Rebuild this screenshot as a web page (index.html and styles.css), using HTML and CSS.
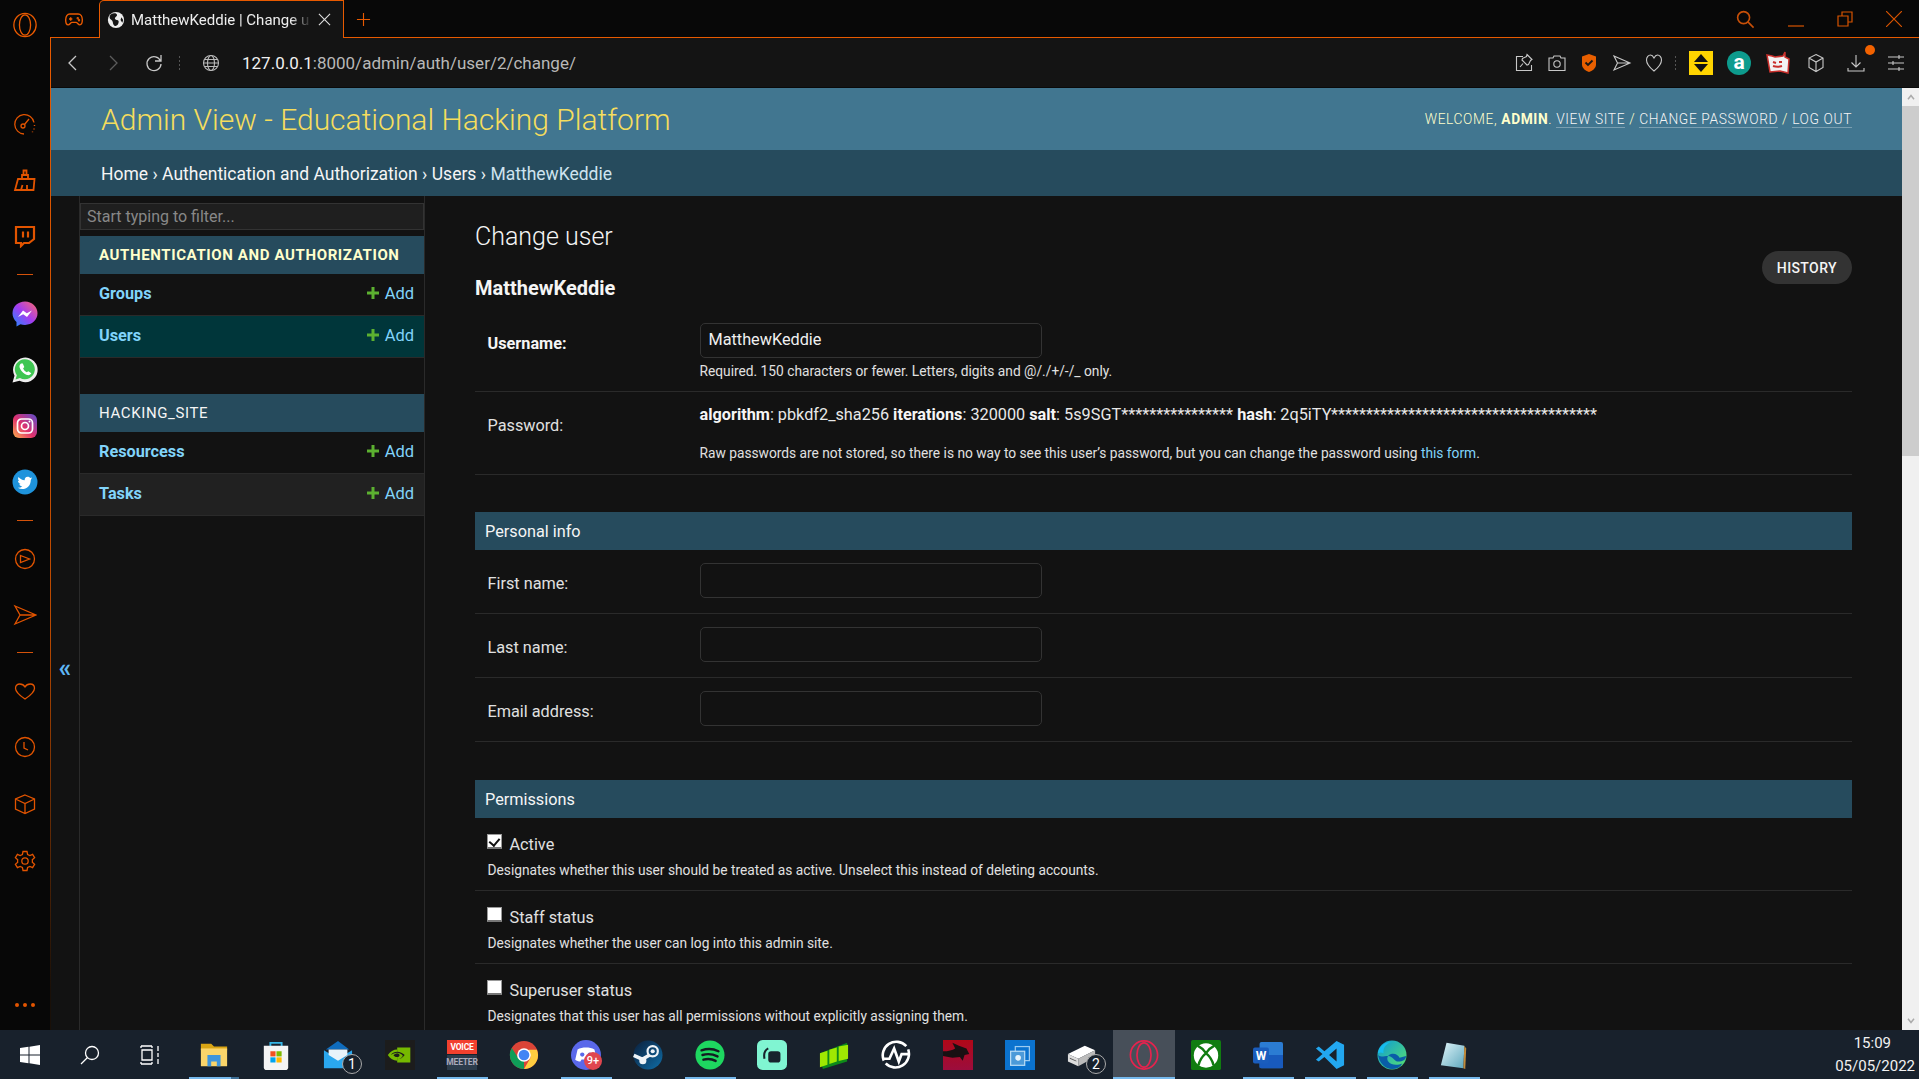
FILE: index.html
```html
<!DOCTYPE html>
<html lang="en">
<head>
<meta charset="utf-8">
<title>MatthewKeddie | Change user</title>
<link rel="stylesheet" href="styles.css">
</head>
<body>
<div class="screen">
  <div class="desk">
    <nav class="rail">
      <svg class="ri logo" viewBox="0 0 28 28"><ellipse cx="14" cy="14" rx="12" ry="12.5"/><ellipse cx="14" cy="14" rx="6" ry="11"/></svg>
      <svg class="ri speed" viewBox="0 0 24 24"><path d="M11 22A9.700 9.700 0 1 1 21 10.500M11.500 12.500L16 7"/><circle cx="10" cy="14" r="2"/><path d="M21.500 13v1M21 16.500v1M19.500 19.500v.8" stroke-width="1.400"/></svg>
      <svg class="ri broom" viewBox="0 0 24 24"><path d="M5 11h16.500l-1 11H2zM9 11V7h6v4M10.500 7V2.500h3V7M8 22l1.500-5M14 22v-5"/></svg>
      <svg class="ri twitch" viewBox="0 0 24 24"><path d="M3 3h18v12l-5 4h-5l-3 3v-3H3z"/><path d="M10 7.500v6M15 7.500v6"/></svg>
      <i class="rdiv"></i>
      <svg class="ra mess" viewBox="0 0 26 26"><defs><linearGradient id="mg" x1="0" y1="1" x2="1" y2="0"><stop offset="0" stop-color="#1b8cff"/><stop offset=".5" stop-color="#a33cf0"/><stop offset="1" stop-color="#ff6a6a"/></linearGradient></defs><path fill="url(#mg)" d="M13 .5C6 .5.500 5.500.500 12.300c0 3.500 1.500 6.500 4 8.700v4.500l4-2.300c1.300.4 2.900.7 4.500.7 7 0 12.500-5 12.500-11.600S20 .5 13 .5z"/><path fill="#fff" d="M6 16l5-6.500 3.800 2.800L20 9.500 15 16l-3.800-2.800z"/></svg>
      <svg class="ra" viewBox="0 0 26 26"><path fill="#eee" d="M.5 25.500l2-6.800a12.300 12.300 0 1 1 5 5z"/><path fill="#3fc652" d="M3.500 22.500l1.300-4.300A10 10 0 1 1 8 21z"/><path fill="#fff" d="M9 6.500c-1.500 1-2 3-1 5 1.500 3 4 5.500 7 6.500 2 .5 3.500-.2 4.300-1.700l-3-2-1.500 1c-1.700-.8-3-2.300-3.700-3.800l1.200-1.500-1.500-3.500z"/></svg>
      <svg class="ra" viewBox="0 0 26 26"><defs><linearGradient id="ig" x1="0" y1="1" x2="1" y2="0"><stop offset="0" stop-color="#fdb34e"/><stop offset=".45" stop-color="#e1306c"/><stop offset="1" stop-color="#5a4fcf"/></linearGradient></defs><rect x="1" y="1" width="24" height="24" rx="6" fill="url(#ig)"/><rect x="5.500" y="6" width="15" height="14" rx="4" fill="none" stroke="#fff" stroke-width="1.700"/><circle cx="13" cy="13" r="3.500" fill="none" stroke="#fff" stroke-width="1.700"/><circle cx="17.500" cy="8.500" r="1" fill="#fff"/></svg>
      <svg class="ra" viewBox="0 0 26 26"><circle cx="13" cy="13" r="12.500" fill="#1e93dc"/><path fill="#fff" d="M20 8.500l-1.800.5c-.6-.8-1.500-1.300-2.500-1.300-1.900 0-3.300 1.600-3 3.500-2.500-.1-4.700-1.300-6.200-3.200-.8 1.500-.4 3.200.9 4.200l-1.400-.4c0 1.600 1.100 2.900 2.600 3.300l-1.300.1c.4 1.300 1.700 2.200 3 2.200-1.400 1-3 1.500-4.600 1.300 5.500 3.200 13 .3 13.100-7.800z"/></svg>
      <i class="rdiv"></i>
      <svg class="ri" viewBox="0 0 24 24"><circle cx="12" cy="12" r="9.500"/><path d="M7.500 8.500l9 3.500-9 3.500z"/></svg>
      <svg class="ri send" viewBox="0 0 24 24"><path d="M2 3l21 9-21 9 5-9zM7 12h16"/></svg>
      <i class="rdiv"></i>
      <svg class="ri" viewBox="0 0 24 24"><path d="M12 20C6 16 2.500 13 2.500 9.200 2.500 6.500 4.500 5 6.800 5 9 5 11 6.300 12 8c1-1.700 3-3 5.200-3 2.300 0 4.300 1.500 4.300 4.200C21.500 13 18 16 12 20z"/></svg>
      <svg class="ri" viewBox="0 0 24 24"><circle cx="12" cy="12" r="9.500"/><path d="M11 7v6l4 2"/></svg>
      <svg class="ri low" viewBox="0 0 24 24"><path d="M12 3l9.500 4v10L12 21.500 2.500 17V7zM2.500 7l9.500 4.500L21.500 7M12 11.500v10"/></svg>
      <svg class="ri low" viewBox="0 0 24 24"><circle cx="12" cy="12" r="3.200"/><path d="M10 2.500h4l.6 3 2.300 1.100 2.700-1.300 2 3.400-2.300 2a7 7 0 0 1 0 2.600l2.300 2-2 3.400-2.700-1.300-2.300 1.100-.6 3h-4l-.6-3-2.300-1.100-2.700 1.300-2-3.400 2.300-2a7 7 0 0 1 0-2.600l-2.300-2 2-3.400 2.700 1.300 2.300-1.100z"/></svg>
      <div class="dots"><i></i><i></i><i></i></div>
    </nav>
    <div class="browser">
      <div class="tabbar">
        <svg class="game" viewBox="0 0 24 24"><path d="M7 6h10c3 0 5 3 5 7s-1 6-3 6-3-3-4.500-3h-5C8 16 7 19 5 19s-3-2-3-6 2-7 5-7zM6 12h4M8 10v4"/><circle cx="16.500" cy="11" r=".6"/><circle cx="18" cy="13.500" r=".6"/></svg>
        <div class="tab">
          <svg class="fav" viewBox="0 0 20 20"><circle cx="10" cy="10" r="9" fill="#eee"/><path fill="#161616" d="M4 4c3-2 6-2 7 0s-3 3-2 5 4 0 4 3-3 6-5 4-1-5-3-6-3-3-1-6zM16 7l2 3-1 3-2-3z"/></svg>
          <span class="tab-title">MatthewKeddie | Change u</span>
          <svg class="tab-x" viewBox="0 0 14 14"><path d="M1 1l12 12M13 1L1 13"/></svg>
        </div>
        <svg class="plus" viewBox="0 0 16 16"><path d="M8 1v14M1 8h14"/></svg>
        <div class="win">
          <svg class="w-search" viewBox="0 0 20 20"><circle cx="8" cy="8" r="6.300"/><path d="M12.500 12.500l6 6"/></svg>
          <svg class="w-btn" viewBox="0 0 16 16"><path d="M0 15h16"/></svg>
          <svg class="w-btn" viewBox="0 0 16 16"><path d="M1 5h10v10H1zM5 5V1h10v10h-4"/></svg>
          <svg class="w-btn" viewBox="0 0 16 16"><path d="M0 0l16 16M16 0L0 16"/></svg>
        </div>
      </div>
      <div class="pane">
        <div class="toolbar">
          <svg class="tb back" viewBox="0 0 20 20"><path d="M13 3l-7 7 7 7"/></svg>
          <svg class="tb fwd" viewBox="0 0 20 20"><path d="M7 3l7 7-7 7"/></svg>
          <svg class="tb reload" viewBox="0 0 20 20"><path d="M16.500 8A7 7 0 1 0 17 11M17 2v6h-6"/></svg>
          <i class="tsep"></i>
          <svg class="tb globe" viewBox="0 0 20 20"><circle cx="10" cy="10" r="7.500"/><ellipse cx="10" cy="10" rx="3.500" ry="7.500"/><path d="M2.500 10h15M3.500 6.500h13M3.500 13.500h13"/></svg>
          <div class="url"><span class="host">127.0.0.1</span>:8000/admin/auth/user/2/change/</div>
          <div class="tools">
            <svg class="tb" viewBox="0 0 20 20"><path d="M9 3.500H2.500v14h15V12M6 14l3-3.500M13 1.500l5 5-1.500 1-2 4-1.500.5-5-5 .5-1.500 4-2z"/></svg>
            <svg class="tb" viewBox="0 0 20 20"><path d="M2 5h4l1-2h6l1 2h4v12.500H2z"/><circle cx="10" cy="11" r="3.200"/></svg>
            <svg class="tb" viewBox="0 0 20 20"><path class="shield" d="M10 1l7 2.500v8c0 4-4 6.500-7 7.500-3-1-7-3.500-7-7.500v-8z"/><path d="M6.500 9.500l2.500 2.500 4.500-4.500" stroke="#161616" stroke-width="1.800"/></svg>
            <svg class="tb" viewBox="0 0 20 20"><path d="M2 3l16 7-16 7 3.500-7zM5.500 10H18"/></svg>
            <svg class="tb" viewBox="0 0 20 20"><path d="M10 18C5 14 2.500 11 2.500 7c0-3 2-5 4-5s2.500 1 3.500 3c1-2 1.500-3 3.500-3s4 2 4 5c0 4-2.500 7-7.500 11z"/></svg>
            <i class="tsep tsep-r"></i>
            <svg class="ext" viewBox="0 0 24 24"><rect width="24" height="24" fill="#ffd400"/><path d="M12 3l7 8H5zM12 21l-7-8h14z" fill="#111"/></svg>
            <svg class="ext" viewBox="0 0 24 24"><circle cx="12" cy="12" r="12" fill="#0d9b8d"/><text class="ext-a" x="12" y="18" text-anchor="middle">a</text></svg>
            <svg class="ext ext-r" viewBox="0 0 24 24"><path fill="#f2f2f2" stroke="#c9302c" stroke-width="1.500" d="M1 4l5 1 3 1 8-1 2-4v5l4 2-1 14-8-2-10 1z"/><path d="M7 11l3 1M13 11l3 0M7 15c3 1 6 1 9 0" fill="none" stroke="#c9302c" stroke-width="2"/></svg>
            <svg class="tb" viewBox="0 0 20 20"><path d="M10 1.500l7 3.500v9.500l-7 4-7-4V5zM3 5l7 4 7-4M10 9v9.500"/></svg>
            <div class="dl">
              <svg class="tb" viewBox="0 0 20 20"><path d="M10 2v12M5.500 9.500L10 14l4.500-4.500M2 15v3h16v-3"/></svg>
              <i class="badge"></i>
            </div>
            <svg class="tb" viewBox="0 0 20 20"><path d="M2 4h16M2 10h16M2 16h16M13 2v4M7 8v4M13 14v4"/></svg>
          </div>
        </div>
        <div class="viewport">
          <div class="page">
            <header class="site-head">
              <h1 class="brand">Admin View - Educational Hacking Platform</h1>
              <div class="user-tools">Welcome, <strong>admin</strong>. <a>View site</a> / <a>Change password</a> / <a>Log out</a></div>
            </header>
            <div class="crumbs"><a>Home</a> <i class="sep">›</i> <a>Authentication and Authorization</a> <i class="sep">›</i> <a>Users</a> <i class="sep">›</i> MatthewKeddie</div>
            <div class="main">
              <div class="toggle">«</div>
              <aside class="side">
                <div class="filter">Start typing to filter...</div>
                <section class="app">
                  <div class="cap cap-strong">Authentication and Authorization</div>
                  <div class="row"><a>Groups</a><span class="add"><svg class="addp" viewBox="0 0 12 12"><path d="M4.500 0h3v4.500H12v3H7.500V12h-3V7.500H0v-3h4.500z"/></svg>Add</span></div>
                  <div class="row cur"><a>Users</a><span class="add"><svg class="addp" viewBox="0 0 12 12"><path d="M4.500 0h3v4.500H12v3H7.500V12h-3V7.500H0v-3h4.500z"/></svg>Add</span></div>
                </section>
                <section class="app">
                  <div class="cap">hacking_site</div>
                  <div class="row"><a>Resourcess</a><span class="add"><svg class="addp" viewBox="0 0 12 12"><path d="M4.500 0h3v4.500H12v3H7.500V12h-3V7.500H0v-3h4.500z"/></svg>Add</span></div>
                  <div class="row alt"><a>Tasks</a><span class="add"><svg class="addp" viewBox="0 0 12 12"><path d="M4.500 0h3v4.500H12v3H7.500V12h-3V7.500H0v-3h4.500z"/></svg>Add</span></div>
                </section>
              </aside>
              <main class="content">
                <h2 class="title">Change user</h2>
                <div class="objhead">
                  <h3 class="obj">MatthewKeddie</h3>
                  <span class="history">History</span>
                </div>
                <div class="frow r-user">
                  <label class="lab req">Username:</label>
                  <div class="fld">
                    <div class="inp val">MatthewKeddie</div>
                    <div class="help">Required. 150 characters or fewer. Letters, digits and @/./+/-/_ only.</div>
                  </div>
                </div>
                <div class="frow r-pass">
                  <label class="lab">Password:</label>
                  <div class="fld">
                    <div class="hash"><strong>algorithm</strong>: pbkdf2_sha256 <strong>iterations</strong>: 320000 <strong>salt</strong>: 5s9SGT**************** <strong>hash</strong>: 2q5iTY**************************************</div>
                    <div class="help pw">Raw passwords are not stored, so there is no way to see this user’s password, but you can change the password using <a class="lnk">this form</a>.</div>
                  </div>
                </div>
                <h4 class="fs">Personal info</h4>
                <div class="frow r-text"><label class="lab">First name:</label><div class="fld"><div class="inp"></div></div></div>
                <div class="frow r-text"><label class="lab">Last name:</label><div class="fld"><div class="inp"></div></div></div>
                <div class="frow r-text"><label class="lab">Email address:</label><div class="fld"><div class="inp"></div></div></div>
                <h4 class="fs">Permissions</h4>
                <div class="crow">
                  <label class="chk"><input type="checkbox" checked>Active</label>
                  <div class="help">Designates whether this user should be treated as active. Unselect this instead of deleting accounts.</div>
                </div>
                <div class="crow">
                  <label class="chk"><input type="checkbox">Staff status</label>
                  <div class="help">Designates whether the user can log into this admin site.</div>
                </div>
                <div class="crow">
                  <label class="chk"><input type="checkbox">Superuser status</label>
                  <div class="help">Designates that this user has all permissions without explicitly assigning them.</div>
                </div>
              </main>
            </div>
          </div>
          <div class="scroll">
            <div class="sb-btn"><svg viewBox="0 0 10 8"><path d="M1 7l4-5 4 5"/></svg></div>
            <div class="sb-track"><div class="sb-thumb"></div></div>
            <div class="sb-btn"><svg viewBox="0 0 10 8"><path d="M1 1l4 5 4-5"/></svg></div>
          </div>
        </div>
      </div>
    </div>
  </div>
  <footer class="taskbar">
    <div class="sys"><svg viewBox="0 0 20 20"><path fill="#fff" d="M0 3l8.500-1.200v7.700H0zM9.500 1.700L20 0v9.500H9.500zM0 10.500h8.500v7.700L0 17zM9.500 10.500H20V20L9.500 18.300z"/></svg></div>
    <div class="sys"><svg viewBox="0 0 20 20"><circle cx="12" cy="8" r="6.500" fill="none" stroke="#fff" stroke-width="1.300"/><path d="M7.500 12.500L1 19" stroke="#fff" stroke-width="1.300"/></svg></div>
    <div class="sys"><svg viewBox="0 0 20 20"><path d="M1 1h11M1 19h11M2 5h10v10H2zM18 1v5M18 8v4M18 14v5M1 1v2M12 1v2M1 19v-2M12 19v-2" fill="none" stroke="#fff" stroke-width="1.300"/></svg></div>
    <div class="app-i on stack"><svg viewBox="0 0 32 32"><path fill="#d9a514" d="M2 4h11l3 3h14v4H2z"/><path fill="#fbd56a" d="M2 9h28v19H2z"/><path fill="#3f95dd" d="M9 16h14v12h-4v-5h-6v5H9z"/></svg></div>
    <div class="app-i"><svg viewBox="0 0 32 32"><path fill="none" stroke="#35b5e5" stroke-width="2" d="M10 7V3h12v4"/><path fill="#f4f4f4" d="M3 6h26v23a3 3 0 0 1-3 3H6a3 3 0 0 1-3-3z"/><rect x="10" y="12" width="5.500" height="5.500" fill="#f25022"/><rect x="16.500" y="12" width="5.500" height="5.500" fill="#7fba00"/><rect x="10" y="18.500" width="5.500" height="5.500" fill="#00a4ef"/><rect x="16.500" y="18.500" width="5.500" height="5.500" fill="#ffb900"/></svg></div>
    <div class="app-i"><svg viewBox="0 0 32 32"><path fill="#0f6cbd" d="M16 1L28 10H3z"/><path fill="#2aa7ee" d="M1 11l15 9 15-9v19H1z"/><path fill="#e9f3fa" d="M6 10h20v6l-10 6-10-6z"/></svg><span class="count">1</span></div>
    <div class="app-i"><svg viewBox="0 0 32 32"><rect width="32" height="32" fill="#1c1c1c"/><rect x="13" y="8" width="14" height="16" fill="#76b900"/><path fill="#76b900" d="M3 16c2.500-4 6-6 10-6v12c-4 0-7.500-2-10-6z"/><path fill="#1c1c1c" d="M6 16c2-2.300 4.500-3.500 7-3.500 3 0 6 1.500 8 3.500-2 3-5 4.500-8 4.500 3 0 5.500-2 6-4-2-2-4-3-6-3-2.300 0-5 1-7 2.500zm7-1.500c-1.500 0-3 .7-4 1.700 1 1.300 2.500 2 4 2 1.500 0 2.500-1 2.500-2s-1-1.700-2.500-1.700z"/></svg></div>
    <div class="app-i on"><div class="vm"><span class="vm-a">VOICE</span><span class="vm-b">MEETER</span></div></div>
    <div class="app-i"><svg viewBox="0 0 32 32"><circle cx="16" cy="16" r="15" fill="#db4437"/><path fill="#0f9d58" d="M16 31A15 15 0 0 1 3 8.500L10 19.500l6 2.500z"/><path fill="#ffcd40" d="M31 16a15 15 0 0 1-15 15l7-12-2-8.500h8.700A15 15 0 0 1 31 16z"/><circle cx="16" cy="16" r="7.300" fill="#fff"/><circle cx="16" cy="16" r="5.700" fill="#4285f4"/></svg></div>
    <div class="app-i on"><svg viewBox="0 0 32 32"><circle cx="16" cy="16" r="16" fill="#5a68ea"/><path fill="#fff" d="M7 10c5-2.500 13-2.500 18 0l2.500 11c-1.500 1-3.500 2-5.500 2l-1.300-2.300H11.300L10 23c-2 0-4-1-5.500-2z"/><circle cx="12" cy="15.500" r="2.300" fill="#5a68ea"/><circle cx="20" cy="15.500" r="2.300" fill="#5a68ea"/></svg><span class="nine">9+</span></div>
    <div class="app-i"><svg viewBox="0 0 32 32"><defs><linearGradient id="st" x1="0" y1="0" x2="1" y2="1"><stop offset="0" stop-color="#0b1e3a"/><stop offset="1" stop-color="#0f6ea8"/></linearGradient></defs><circle cx="16" cy="16" r="15.500" fill="url(#st)"/><circle cx="21" cy="12" r="5.500" fill="none" stroke="#eef3f7" stroke-width="2.300"/><circle cx="21" cy="12" r="2.200" fill="#eef3f7"/><path d="M.8 16.500l9 4 8-4.500" stroke="#eef3f7" stroke-width="3.800" fill="none"/><circle cx="10.500" cy="22" r="3.800" fill="#eef3f7"/></svg></div>
    <div class="app-i on"><svg viewBox="0 0 32 32"><circle cx="16" cy="16" r="15.500" fill="#1ed760"/><path d="M7 11c6-2 13-1.500 18 1M8 16c5-1.500 11-1 16 1.500M9 21c4-1 9-.8 13 1.300" fill="none" stroke="#141b22" stroke-width="2.600" stroke-linecap="round"/></svg></div>
    <div class="app-i"><svg viewBox="0 0 32 32"><rect width="32" height="32" rx="6" fill="#80f5d2"/><rect x="12" y="12" width="13" height="12" rx="3" fill="#17242d"/><path d="M8 20c-1-5 0-9 4-11" fill="none" stroke="#17242d" stroke-width="2.200"/></svg></div>
    <div class="app-i"><svg viewBox="0 0 32 32"><path fill="#0e8a1a" d="M1 14l29-11v20L4 31z"/><path fill="#9fe802" d="M1 14l8-2.500v15L1 29zM11 10.500l8-2.500v15l-8 2.500zM21 7l10-2v15l-10 2.500z"/></svg></div>
    <div class="app-i"><svg viewBox="0 0 32 32"><path d="M3 22A14.500 14.500 0 0 1 27 6.500M29 10a14.500 14.500 0 0 1-24 15" fill="none" stroke="#fff" stroke-width="2.800"/><path d="M2 20h7l5-11 5 14 3-8h8" fill="none" stroke="#fff" stroke-width="2.800"/></svg></div>
    <div class="app-i"><svg viewBox="0 0 32 32"><defs><linearGradient id="msi" x1="0" y1="0" x2="0" y2="1"><stop offset="0" stop-color="#b00818"/><stop offset="1" stop-color="#9c0d3d"/></linearGradient></defs><rect width="32" height="32" fill="url(#msi)"/><path fill="#181012" d="M0 12c6 0 10-1 13-3l-3-6 7 3 8 3 3 6-5 1-2 6-3-4-8 1-10-2z"/></svg></div>
    <div class="app-i"><svg viewBox="0 0 32 32"><rect width="32" height="32" fill="#0b73cf"/><rect x="11" y="7" width="15" height="15" fill="none" stroke="#9ccbf0" stroke-width="1.300"/><rect x="6" y="12" width="15" height="15" fill="#4c9ad9" stroke="#b9dcf5" stroke-width="1.300"/><circle cx="14" cy="19" r="3" fill="#e8f4fc"/></svg></div>
    <div class="app-i"><svg viewBox="0 0 32 32"><path fill="#fff" d="M1 15l18-9 11 5-18 9z"/><path fill="#ddd" d="M1 15l11 5v8L1 23z"/><path fill="#555" d="M3 19l7 3v1l-7-3z"/><path fill="#bbb" d="M12 20l18-9v7l-18 10z"/></svg><span class="count">2</span></div>
    <div class="app-i on cur-app"><svg viewBox="0 0 32 32"><ellipse cx="16" cy="16" rx="14.500" ry="15" fill="none" stroke="#e5234e" stroke-width="1.800"/><ellipse cx="16" cy="16" rx="7.500" ry="13" fill="none" stroke="#e5234e" stroke-width="1.800"/></svg></div>
    <div class="app-i"><svg viewBox="0 0 32 32"><rect width="32" height="32" rx="2" fill="#107c10"/><circle cx="16" cy="16.500" r="13" fill="#fff"/><path d="M7 6c4 2 7 5 9 8 2-3 5-6 9-8M16 14c-4 3.500-7 8-8 13M16 14c4 3.500 7 8 8 13" fill="none" stroke="#107c10" stroke-width="2.600"/></svg></div>
    <div class="app-i on"><svg viewBox="0 0 32 32"><rect x="7" y="2" width="25" height="28" rx="2" fill="#2b7cd3"/><rect x="7" y="16" width="25" height="14" fill="#185abd"/><rect y="8" width="17" height="17" rx="2" fill="#1a5dbd"/><text class="w" x="8.500" y="21" text-anchor="middle">W</text></svg></div>
    <div class="app-i on"><svg viewBox="0 0 32 32"><path fill="#22a7f0" d="M23 1l8 4v22l-8 4-13-13-6 5-3-2 7-6-7-6 3-2 6 5zm0 8l-8 7 8 7z"/></svg></div>
    <div class="app-i on"><svg viewBox="0 0 32 32"><defs><linearGradient id="ed" x1="0" y1="0" x2="1" y2="1"><stop offset="0" stop-color="#0b9ad8"/><stop offset="1" stop-color="#5be36b"/></linearGradient></defs><circle cx="16" cy="16" r="15.500" fill="url(#ed)"/><path fill="#0a5da8" d="M1 15c1 10 8 16 15 16 5 0 9-2 11-6-5 2-12 2-15-2-2-3-1-7 3-8 4-1 8 1 9 4l7-2c0 4-4 6-8 6 -5 0-6-6-11-6-5 0-10 2-11-2z"/><path fill="#16bdf0" d="M1 14C2 6 9 2 15 2c-5 2-9 6-8 12-2-1-4-1-6 0z"/></svg></div>
    <div class="app-i on"><svg viewBox="0 0 32 32"><defs><linearGradient id="np" x1="0" y1="0" x2="1" y2="1"><stop offset="0" stop-color="#e0f5fa"/><stop offset="1" stop-color="#5fa8bd"/></linearGradient></defs><path fill="url(#np)" d="M8 3l19 3-1 24L2 27z"/><path fill="#c08a3a" d="M27 6l2 3-1 22-2-1z"/></svg></div>
    <div class="clock"><span>15:09</span><span>05/05/2022</span></div>
  </footer>
</div>
</body>
</html>
```

FILE: styles.css
```css
* { box-sizing: border-box; }
html, body { margin: 0; height: 100%; overflow: hidden; background: #000; }
body { font-family: Roboto, "Liberation Sans", sans-serif; color: #eee; }
h1, h2, h3, h4 { margin: 0; }
svg { display: block; }

.screen { height: 1079px; display: flex; flex-direction: column; }
.desk { flex: 1; display: flex; min-height: 0; }

/* Opera rail */
.rail { width: 50px; flex: none; background: #070707; display: flex; flex-direction: column; align-items: center; position: relative; }
.ri { width: 24px; height: 24px; fill: none; stroke: #e25400; stroke-width: 1.300; flex: none; margin-top: 32px; }
.ri.logo { width: 26px; height: 28px; margin-top: 11px; stroke-width: 1.400; stroke: #ea5a00; }
.ri.speed { margin-top: 73px; }
.ri.broom { stroke-width: 1.800; }
.ri.twitch { stroke-width: 2.200; }
.ri.low { margin-top: 33px; }
.ra { width: 26px; height: 26px; flex: none; margin-top: 30px; }
.rdiv { width: 16px; height: 1px; background: #d4520a; flex: none; margin-top: 26px; margin-bottom: -6px; }
.ra + .rdiv { margin-top: 25px; }
.send + .rdiv { margin-top: 25px; }
.ra.mess { margin-top: 32px; }
.send { margin-top: 32px; }
.dots { margin-top: auto; margin-bottom: 23px; display: flex; gap: 4px; }
.dots i { width: 4px; height: 4px; border-radius: 50%; background: #e25400; }

/* Tab strip */
.browser { flex: 1; min-width: 0; display: flex; flex-direction: column; background: #0a0a0a; }
.tabbar { height: 38px; flex: none; display: flex; align-items: center; position: relative; background: #080808; }
.tabbar::after { content: ""; position: absolute; left: 0; right: 0; bottom: 0; height: 1px; background: #e85a00; }
.game { width: 20px; height: 20px; margin-left: 14px; fill: none; stroke: #ea5a00; stroke-width: 1.700; flex: none; }
.tab { position: relative; z-index: 1; margin-left: 15px; width: 245px; height: 38px; flex: none; background: #141414; border: 1px solid #e85a00; border-bottom: 0; display: flex; align-items: center; padding-left: 7px; border-top-left-radius: 5px; }
.fav { width: 18px; height: 18px; flex: none; }
.tab-title { margin-left: 6px; width: 181px; white-space: nowrap; font-size: 15px; color: #eee; -webkit-mask-image: linear-gradient(90deg, #000 88%, transparent); mask-image: linear-gradient(90deg, #000 88%, transparent); }
.tab-x { width: 13px; height: 13px; margin-left: 6px; fill: none; stroke: #ddd; stroke-width: 1.200; flex: none; }
.plus { width: 15px; height: 15px; margin-left: 12px; fill: none; stroke: #e85a00; stroke-width: 1.200; flex: none; }
.win { margin-left: auto; display: flex; align-items: center; gap: 33px; padding-right: 17px; }
.w-search { width: 19px; height: 19px; fill: none; stroke: #c85008; stroke-width: 1.700; }
.w-btn { width: 16px; height: 16px; fill: none; stroke: #d85400; stroke-width: 1.200; }

/* Toolbar + page frame */
.pane { flex: 1; min-height: 0; display: flex; flex-direction: column; border-left: 1px solid; border-image: linear-gradient(#e85a00 0, #b84800 60%, #1a1008 96%) 1; }
.toolbar { height: 50px; flex: none; background: #141414; display: flex; align-items: center; border-bottom: 1px solid #0a0a0a; }
.tb { width: 20px; height: 20px; fill: none; stroke: #c8c8c8; stroke-width: 1.100; flex: none; }
.tb.back { margin-left: 12px; stroke-width: 1.300; }
.tb.fwd { margin-left: 20px; stroke: #5c5c5c; stroke-width: 1.300; }
.tb.reload { margin-left: 21px; stroke-width: 1.300; }
.tsep { width: 1px; height: 14px; flex: none; margin-left: 15px; background: repeating-linear-gradient(#555 0 2px, transparent 2px 4px); }
.tb.globe { margin-left: 21px; stroke: #bbb; }
.url { margin-left: 21px; font-size: 17px; color: #b8b8b8; white-space: nowrap; }
.host { color: #f0f0f0; }
.tools { margin-left: auto; display: flex; align-items: center; padding-right: 13px; }
.tools > * { margin-left: 12.500px; }
.tools > *:first-child { margin-left: 0; }
.shield { fill: #e85f00; stroke: none; }
.tsep.tsep-r { margin-left: 11px; }
.ext { width: 24px; height: 24px; flex: none; }
.tools > .ext { margin-left: 14px; }
.tools > .ext-r { margin-left: 15px; }
.tools > .tsep-r + .ext { margin-left: 13px; }
.tools > .ext + .tb { margin-left: 16px; }
.ext-a { font: 700 21px Roboto, sans-serif; fill: #fff; }
.dl { position: relative; }
.tools > .dl { margin-left: 20px; }
.tools > .dl + .tb { margin-left: 20px; }
.badge { position: absolute; top: -8px; right: -9px; width: 10px; height: 10px; border-radius: 50%; background: #f26200; }

.viewport { flex: 1; min-height: 0; display: flex; }
.page { flex: 1; min-width: 0; background: #121212; display: flex; flex-direction: column; overflow: hidden; }

/* Django admin */
.site-head { height: 62px; flex: none; background: #417690; padding: 0 50px; display: flex; align-items: center; justify-content: space-between; }
.brand { font-size: 30px; font-weight: 300; color: #f5dd5d; white-space: nowrap; }
.user-tools { font-size: 13.750px; font-weight: 300; letter-spacing: .625px; text-transform: uppercase; color: #ffc; white-space: nowrap; }
.user-tools strong { font-weight: 700; }
.user-tools a { color: #f5f5f5; border-bottom: 1px solid rgba(255,255,255,.3); }
.crumbs { height: 46px; flex: none; background: #264b5d; padding: 1px 50px 0; display: flex; align-items: center; gap: .25em; font-size: 17.500px; font-weight: 400; color: #cfe3ef; white-space: nowrap; }
.crumbs a { color: #f5f5f5; }
.sep { font-style: normal; color: #e8eef2; }
.main { flex: 1; min-height: 0; display: flex; }
.toggle { width: 28px; flex: none; display: flex; align-items: center; justify-content: center; padding-top: 110px; background: #121212; font-size: 25px; font-weight: 700; line-height: 1; color: #5fb7f5; }
.side { width: 346px; flex: none; border-left: 1px solid #2a2a2a; border-right: 1px solid #2a2a2a; background: #121212; }
.filter { margin-top: 7px; height: 27px; border: 1px solid #333; background: #1f1f1f; color: #888; font-size: 16px; line-height: 25px; padding-left: 6px; }
.app { margin-top: 6px; margin-bottom: 36px; }
.cap { height: 38px; background: #264b5d; padding-left: 19px; display: flex; align-items: center; font-size: 15px; letter-spacing: .62px; text-transform: uppercase; color: #f5f5f5; }
.cap-strong { font-weight: 700; color: #ffc; }
.row { height: 42px; padding: 0 10px 3px 19px; display: flex; align-items: center; justify-content: space-between; font-size: 16.250px; border-bottom: 1px solid #2a2a2a; background: #121212; }
.row.cur { background: #00363a; }
.row.alt { background: #212121; }
.row a { font-weight: 700; color: #81d4fa; }
.add { color: #81d4fa; font-weight: 400; display: flex; align-items: center; gap: 6px; font-size: 16.500px; }
.addp { width: 12px; height: 12px; fill: #5cb030; }

.content { flex: 1; min-width: 0; padding: 0 50px; }
.title { margin-top: 25px; font-size: 25px; font-weight: 300; color: #f5f5f5; line-height: 32px; }
.objhead { display: flex; justify-content: space-between; align-items: flex-start; height: 70px; }
.obj { font-size: 20px; font-weight: 700; color: #f5f5f5; margin-top: 22.500px; }
.history { margin-top: -2px; height: 33px; padding: 0 15px; border-radius: 17px; background: #333; color: #f5f5f5; font-size: 14px; font-weight: 500; letter-spacing: .4px; text-transform: uppercase; display: flex; align-items: center; }
.frow { display: flex; border-bottom: 1px solid #2a2a2a; padding-left: 12.500px; }
.lab { width: 212px; flex: none; font-size: 16.250px; color: #e0e0e0; }
.lab.req { font-weight: 700; color: #f5f5f5; }
.fld { flex: 1; min-width: 0; }
.inp { width: 342px; height: 35px; border: 1px solid #333; border-radius: 5px; background: #121212; font-size: 16.250px; line-height: 32px; padding-left: 8px; color: #f0f0f0; }
.help { font-size: 13.750px; color: #e0e0e0; white-space: nowrap; }
.r-user { height: 69px; }
.r-user .lab { padding-top: 11px; }
.r-user .help { margin-top: 5px; }
.r-pass { height: 83px; padding-top: 13px; }
.r-pass .lab { margin-top: 11px; }
.hash { font-size: 16.250px; line-height: 19px; color: #e8e8e8; white-space: nowrap; }
.hash strong { font-weight: 700; color: #f5f5f5; }
.help.pw { margin-top: 21px; }
.lnk { color: #81d4fa; }
.fs { height: 38px; margin-top: 37px; background: #264b5d; color: #f5f5f5; font-size: 16.250px; font-weight: 400; padding-left: 10px; display: flex; align-items: center; }
.r-text + .fs { margin-top: 38px; }
.r-text { height: 64px; padding-top: 13px; }
.r-text .lab { line-height: 35px; margin-top: 3px; }
.crow { padding: 13.500px 12.500px 0; height: 73px; border-bottom: 1px solid #2a2a2a; }
.crow:last-child { border: 0; }
.chk { display: flex; align-items: center; font-size: 16.250px; color: #e0e0e0; gap: 8px; height: 26px; }
.chk input { appearance: none; -webkit-appearance: none; width: 15px; height: 15px; margin: -6px 0 0 -1px; flex: none; background: #fff; border-bottom: 2px solid #777; border-right: 1px solid #999; border-left: 1px solid #999; border-top: 1px solid #999; position: relative; }
.chk input:checked::after { content: ""; position: absolute; left: 3px; top: 1px; width: 5px; height: 8px; border: solid #111; border-width: 0 2px 2px 0; transform: rotate(40deg); }
.crow .help { margin-top: 4px; }

/* Scrollbar */
.scroll { width: 17px; flex: none; display: flex; flex-direction: column; }
.sb-btn { height: 18px; background: #f0f0f0; display: flex; align-items: center; justify-content: center; flex: none; }
.sb-btn svg { width: 8px; height: 6px; fill: none; stroke: #aaa; stroke-width: 2; }
.sb-track { flex: 1; background: #f0f0f0; }
.sb-thumb { height: 350px; background: #cdcdcd; }

/* Windows taskbar */
.taskbar { height: 49px; flex: none; background: #18212c; display: flex; align-items: stretch; }
.sys { width: 60px; flex: none; display: flex; align-items: center; justify-content: center; }
.sys svg { width: 20px; height: 20px; }
.sys:first-child svg { width: 20px; height: 24px; }
.app-i { width: 62px; flex: none; display: flex; align-items: center; justify-content: center; position: relative; }
.app-i svg { width: 30px; height: 30px; }
.app-i.on::after { content: ""; position: absolute; left: 6px; right: 5px; bottom: 0; height: 2px; background: #76b9ed; }
.app-i.stack::after { right: 14px; }
.app-i.stack::before { content: ""; position: absolute; left: 48px; width: 8px; bottom: 0; height: 2px; background: #3e6f95; }
.app-i.cur-app { background: #474f59; }
.app-i.cur-app::after { left: 0; right: 0; }
.sys + .app-i { margin-left: 3px; }
.count { position: absolute; right: 7px; bottom: 5px; width: 20px; height: 20px; border-radius: 50%; background: #18212c; border: 1px solid #aaa; color: #fff; font-size: 14px; text-align: center; line-height: 18px; }
.nine { position: absolute; right: 15px; bottom: 9px; width: 18px; height: 18px; border-radius: 50%; background: #e0464f; color: #fff; font-size: 11px; font-weight: 500; text-align: center; line-height: 18px; }
.vm { width: 30px; height: 30px; display: flex; flex-direction: column; gap: 1px; font-size: 8.500px; font-weight: 700; text-align: center; }
.vm span { flex: 1; display: flex; align-items: center; justify-content: center; letter-spacing: -.2px; }
.vm-a { background: #f2402e; color: #fff; }
.vm-b { background: #2c3c4c; color: #aab; }
.w { font: 700 13px Roboto, sans-serif; fill: #fff; }
.clock { margin-left: auto; display: flex; flex-direction: column; align-items: flex-end; justify-content: center; gap: 8px; padding-right: 4px; font-size: 15px; color: #f2f2f2; line-height: 15px; }
.clock span:first-child { padding-right: 24px; }
```
